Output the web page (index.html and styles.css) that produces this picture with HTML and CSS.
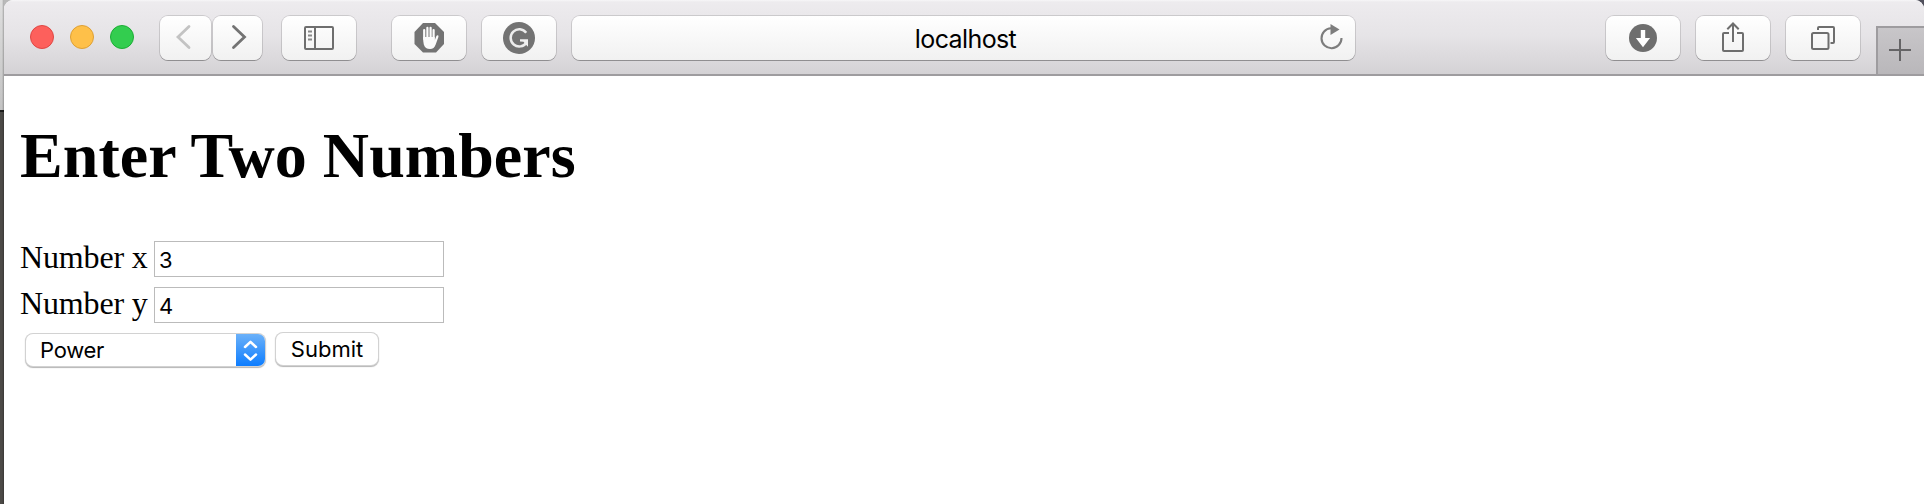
FILE: index.html
```html
<!DOCTYPE html>
<html lang="en">
<head>
<meta charset="utf-8">
<title>localhost</title>
<link rel="stylesheet" href="styles.css">
</head>
<body>
<div class="desktop">
  <div class="behind"></div>
  <div class="window">
    <header class="toolbar">
      <div class="lights"><i class="light red"></i><i class="light yellow"></i><i class="light green"></i></div>
      <div class="nav">
        <div class="btn back"><svg width="52" height="44" viewBox="0 0 52 44"><path d="M29 10.500 18 21l11 10.500" fill="none" stroke="#c3c3c3" stroke-width="2.800" stroke-linecap="round"/></svg></div>
        <div class="btn forward"><svg width="49" height="44" viewBox="0 0 49 44"><path d="M20.500 10.500 31.500 21l-11 10.500" fill="none" stroke="#737373" stroke-width="2.800" stroke-linecap="round"/></svg></div>
      </div>
      <div class="btn sidebar"><svg width="74" height="44" viewBox="0 0 74 44" fill="none" stroke="#6e6e6e" stroke-width="2"><rect x="23" y="11" width="28" height="22" rx="1"/><path d="M33 11v22"/><path d="M26 15.500h4M26 19.500h4M26 23.500h4" stroke="#888" stroke-width="1.800"/></svg></div>
      <div class="btn blocker"><svg width="74" height="44" viewBox="0 0 74 44"><path d="M31 7h12l9 9v12l-8 8.500H31L22.500 28V16z" fill="#737373"/><path d="M32.200 14v9M35.400 11.800v11M38.600 11.800v11M41.600 14v10" stroke="#fafafa" stroke-width="2.200" stroke-linecap="round"/><path d="M31.100 21h11.600v3.500l1.600-4.200q.8-1.800 2-.8.400.5 0 1.700l-2.600 7.300q-1.600 4.500-5.600 4.500-5 0-6.300-4.500-.7-2.500-.7-7.500z" fill="#fafafa"/></svg></div>
      <div class="btn grammar"><svg width="74" height="44" viewBox="0 0 74 44"><circle cx="37" cy="22" r="16" fill="#737373"/><path d="M44.200 16.800A8.600 8.600 0 1 0 44.500 26.500" fill="none" stroke="#ededed" stroke-width="2.500"/><path d="M38 23.300h8v7.500l-2-2-2.500-3-3.500-.300z" fill="#f1f1f1"/></svg></div>
      <div class="address">
        <span class="host">localhost</span>
        <svg class="reload" width="28" height="30" viewBox="0 0 28 30"><path d="M13 6.200A10 10 0 1 0 23.500 16" fill="none" stroke="#7d7d7d" stroke-width="2.100"/><path d="M12.500 2l9 5.500-9 5.500z" fill="#7d7d7d"/></svg>
      </div>
      <div class="btn download"><svg width="74" height="44" viewBox="0 0 74 44"><circle cx="37" cy="22" r="14" fill="#6e6e6e"/><path d="M34.800 14h4.400v8h4.900L37 31.300 29.900 22h4.900z" fill="#fff"/></svg></div>
      <div class="btn share"><svg width="74" height="44" viewBox="0 0 74 44" fill="none" stroke="#6e6e6e" stroke-width="2"><path d="M33 17h-5q-1 0-1 1v16q0 1 1 1h18q1 0 1-1V18q0-1-1-1h-5M37 26V8M31.300 13.200 37 7.500l5.700 5.700"/></svg></div>
      <div class="btn tabs"><svg width="74" height="44" viewBox="0 0 74 44" fill="none" stroke="#6e6e6e" stroke-width="2"><rect x="26" y="17" width="16.500" height="16" rx="1.500"/><path d="M32 14v-2q0-1 1-1h14q1 0 1 1v14q0 1-1 1h-2.500"/></svg></div>
      <div class="newtab"><svg width="46" height="46" viewBox="0 0 46 46"><path d="M11 22h22M22 11v22" stroke="#656466" stroke-width="2"/></svg></div>
    </header>
    <main class="page">
      <h1 class="title">Enter Two Numbers</h1>
      <form class="form">
        <div class="row"><label class="label" for="x">Number x</label><input class="field" id="x" value="3"></div>
        <div class="row"><label class="label" for="y">Number y</label><input class="field" id="y" value="4"></div>
        <div class="actions">
          <div class="select"><span class="power">Power</span><span class="arrows"><svg width="29" height="34" viewBox="0 0 29 34"><path d="m9 13 5.500-5.200L20 13M9 20.500l5.500 5.200 5.500-5.200" fill="none" stroke="#fff" stroke-width="2.500" stroke-linecap="round" stroke-linejoin="round"/></svg></span></div>
          <button class="submit" type="button"><span class="caption">Submit</span></button>
        </div>
      </form>
    </main>
  </div>
</div>
</body>
</html>
```
FILE: styles.css
```css
* { box-sizing: border-box; }
body { margin: 0; overflow: hidden; background: #fff; }
svg { display: block; flex: none; }
.desktop { display: flex; width: 1924px; height: 504px; background: linear-gradient(90deg, #b9b9b9 50%, #50505c 50%); }
.behind { width: 4px; background: linear-gradient(90deg, transparent 2px, rgba(0,0,0,.25)), linear-gradient(#dedede, #c3c3c3 110px, #1d1d1d 110px, #1d1d1d 112px, #4c4a47 112px); }
.window { width: 1920px; background: #fff; border-radius: 9px 9px 0 0; overflow: hidden; }
.toolbar { display: flex; align-items: flex-start; height: 76px; border-bottom: 2px solid #9e9c9f; background: linear-gradient(#f7f6f8 0, #edebee 2px, #e6e4e7 35px, #d4d2d5 74px); }
.lights { display: flex; gap: 16px; margin: 25px 26px 0 26px; }
.light { width: 24px; height: 24px; border-radius: 50%; border: 1px solid; }
.red { background: #fd605c; border-color: #df4744; }
.yellow { background: #fec049; border-color: #dea035; }
.green { background: #33cd4f; border-color: #1cad35; }
.nav { display: flex; gap: 2px; margin-right: 20px; }
.btn, .address { flex: none; width: 74px; height: 44px; margin-top: 16px; border-radius: 8px; background: linear-gradient(#fff, #f1f1f1); box-shadow: 0 0 0 1px rgba(0,0,0,.13), 0 1px 0 rgba(0,0,0,.24); }
.back { width: 51px; }
.forward { width: 49px; }
.blocker { margin-left: 36px; }
.grammar, .address, .share, .tabs { margin-left: 16px; }
.address { display: flex; align-items: center; width: 783px; }
.host { width: 783px; flex: none; padding: 2px 0 0 4px; text-align: center; font: 25px/44px Inter, sans-serif; letter-spacing: -.6px; color: #000; }
.reload { margin-left: -37px; margin-top: -2px; }
.download { margin-left: 251px; }
.newtab { width: 48px; height: 48px; margin: 26px 0 0 16px; border: solid #9e9c9f; border-width: 2px 0 0 2px; background: linear-gradient(#c8c6c9, #b9b7ba); }
.page { padding: 0 16px; }
.title { margin: 0; padding-top: 43px; font: bold 64px/74px "Liberation Serif", serif; letter-spacing: .06px; color: #000; }
.form { margin-top: 48px; }
.row { display: flex; height: 36px; margin-bottom: 10px; }
.label { width: 134px; font: 32px/32px "Liberation Serif", serif; letter-spacing: -.15px; white-space: nowrap; }
.field { width: 290px; height: 36px; padding: 1px 0 0 4px; border: 1px solid #bbb; border-radius: 0; background: #fff; font: 22px/34px Inter, sans-serif; letter-spacing: -.5px; color: #000; outline: none; }
.actions { display: flex; gap: 11px; padding-left: 6px; }
.select, .submit { display: flex; height: 32px; border-radius: 7px; background: #fff; box-shadow: 0 0 0 1px #d2d2d2, 0 1px 1px 1px #b5b5b5; font: 22px/33px Inter, sans-serif; color: #000; }
.select { width: 239px; margin-top: 1px; justify-content: space-between; overflow: hidden; }
.power { padding-left: 14px; letter-spacing: -.3px; }
.arrows { width: 29px; height: 34px; background: linear-gradient(#6bb1f9, #087aff); }
.submit { width: 102px; padding: 0; border: 0; justify-content: center; letter-spacing: 0; }
```
